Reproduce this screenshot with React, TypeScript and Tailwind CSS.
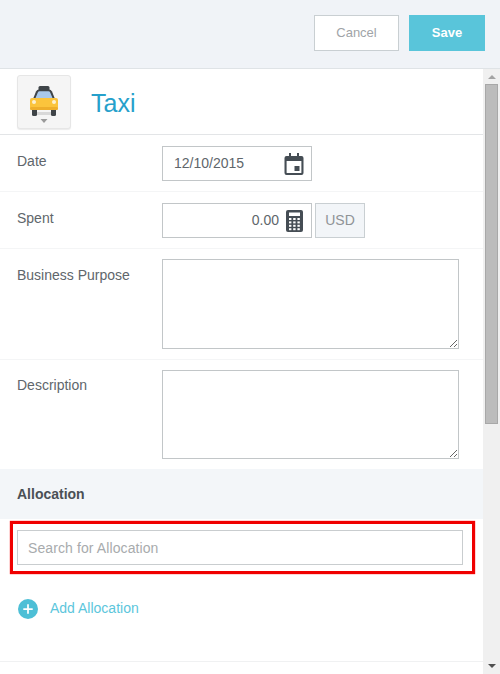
import { Plus } from "lucide-react";

const font = { fontFamily: '"Liberation Sans", Arial, sans-serif' };

function TaxiIcon() {
  return (
    <svg width="30" height="40" viewBox="0 0 30 40">
      <rect x="9.5" y="1" width="11" height="5" rx="1.5" fill="#3f4448" />
      <path d="M4 14 L7 6.5 Q8 4.5 10 4.5 H20 Q22 4.5 23 6.5 L26 14 Z" fill="#3f4448" />
      <path d="M6.5 13 L8.8 7.5 Q9.3 6.3 10.5 6.3 H19.5 Q20.7 6.3 21.2 7.5 L23.5 13 Z" fill="#a9c8ea" />
      <rect x="3" y="22" width="5" height="9" rx="1.5" fill="#3f4448" />
      <rect x="22" y="22" width="5" height="9" rx="1.5" fill="#3f4448" />
      <rect x="1" y="13" width="28" height="12" rx="2" fill="#fbc43c" />
      <rect x="1" y="22" width="28" height="3" rx="1.5" fill="#eeae2b" />
      <circle cx="5" cy="17" r="2" fill="#fdf1cf" />
      <circle cx="25" cy="17" r="2" fill="#fdf1cf" />
      <rect x="8" y="27" width="14" height="3" fill="#d8d8d8" />
      <path d="M11.5 34 H18.5 L15 38 Z" fill="#9a9a9a" />
    </svg>
  );
}

function CalendarIcon() {
  return (
    <svg width="20" height="22" viewBox="0 0 20 22" fill="#454d54">
      <path d="M5 0h2v3h6V0h2v3h2.5A2 2 0 0 1 19.5 5v15a2 2 0 0 1-2 2h-15a2 2 0 0 1-2-2V5a2 2 0 0 1 2-2H5V0zM2.6 8v11.4a.6.6 0 0 0 .6.6h13.6a.6.6 0 0 0 .6-.6V8H2.6z" />
      <rect x="10.5" y="13" width="5" height="5" />
    </svg>
  );
}

function CalculatorIcon() {
  const keys = [0, 1, 2, 3].flatMap((r) =>
    [0, 1, 2].map((c) => <rect key={`${r}-${c}`} x={3 + c * 4.2} y={8 + r * 3.4} width="2.4" height="2" fill="#fff" />),
  );
  return (
    <svg width="17" height="22" viewBox="0 0 17 22">
      <rect width="17" height="22" rx="2" fill="#454d54" />
      <rect x="3" y="2.5" width="11" height="3.5" fill="#fff" />
      {keys}
    </svg>
  );
}

function Row({ label, className, children }: { label: string; className: string; children: React.ReactNode }) {
  return (
    <div className={`flex border-b border-[#f4f5f6] pl-[17px] ${className}`}>
      <div className="w-[145px] shrink-0 text-[14px] leading-[20px] text-[#60666b]">{label}</div>
      {children}
    </div>
  );
}

export default function App() {
  return (
    <div className="relative flex h-[674px] w-[500px] flex-col overflow-hidden bg-white" style={font}>
      <header className="flex h-[69px] shrink-0 items-start justify-end gap-[10px] border-b border-[#dfe3e6] bg-[#f0f3f7] pr-[15px] pt-[15px]">
        <button className="h-[36px] w-[85px] border border-[#c9cfd2] bg-white text-[13px] text-[#a0a4a7]">Cancel</button>
        <button className="h-[36px] w-[76px] bg-[#59c5da] text-[13px] font-bold text-white">Save</button>
      </header>

      <div className="flex min-h-0 flex-1">
        <main className="w-[483px] shrink-0">
          <div className="flex h-[66px] items-center gap-[20px] border-b border-[#e3e5e7] pl-[17px]">
            <div className="flex h-[54px] w-[54px] items-center justify-center rounded-[3px] border border-[#e6e6e6] bg-[#f5f5f5] pt-[6px] shadow-[0_1px_1px_rgba(0,0,0,0.08)]">
              <TaxiIcon />
            </div>
            <h1 className="pt-[3px] text-[25px] font-normal leading-none text-[#26a0cb]">Taxi</h1>
          </div>

          <Row label="Date" className="h-[57px] pt-[16px]">
            <div className="-mt-[5px] flex h-[35px] w-[150px] items-center justify-between border border-[#c2c6c8] pl-[11px] pr-[7px] text-[14px] text-[#60666b]">
              <span>12/10/2015</span>
              <CalendarIcon />
            </div>
          </Row>

          <Row label="Spent" className="h-[57px] pt-[16px]">
            <div className="-mt-[5px] flex gap-[3px]">
              <div className="flex h-[35px] w-[150px] items-center justify-end gap-[7px] border border-[#c2c6c8] pr-[8px] text-[14px] text-[#60666b]">
                <span>0.00</span>
                <CalculatorIcon />
              </div>
              <div className="flex h-[35px] w-[50px] items-center justify-center border border-[#c9cfd2] bg-[#f2f5f8] text-[14px] text-[#8f9396]">USD</div>
            </div>
          </Row>

          <Row label="Business Purpose" className="h-[111px] pt-[16px]">
            <textarea className="-mt-[6px] h-[90px] w-[297px] resize border border-[#c2c6c8]" />
          </Row>

          <Row label="Description" className="h-[109px] border-b-0 pt-[15px]">
            <textarea className="-mt-[5px] h-[89px] w-[297px] resize border border-[#c2c6c8]" />
          </Row>

          <div className="flex h-[50px] items-center bg-[#f3f6f9] pl-[17px] text-[14px] font-bold text-[#4a5055]">Allocation</div>

          <div className="px-[17px] pt-[11px]">
            <input
              placeholder="Search for Allocation"
              className="h-[35px] w-[446px] border border-[#c9cdcf] pl-[10px] text-[14px] tracking-[0.1px] text-[#555b60] outline-none placeholder:text-[#a8abad]"
            />
          </div>

          <div className="flex items-center gap-[12px] pl-[18px] pt-[33px]">
            <span className="flex h-[20px] w-[20px] items-center justify-center rounded-full bg-[#4dbfd6]">
              <Plus size={14} strokeWidth={3} className="text-white" />
            </span>
            <span className="text-[14px] text-[#5cc6dc]">Add Allocation</span>
          </div>

          <div className="mt-[42px] border-t border-[#f0f1f2]" />
        </main>

        <div className="relative flex w-[17px] shrink-0 flex-col items-center bg-[#f0f0f0]">
          <div className="mt-[6px] h-0 w-0 border-x-[4px] border-b-[4px] border-x-transparent border-b-[#a3a3a3]" />
          <div className="mt-[5px] h-[340px] w-[13px] border border-[#a8a8a8] bg-[#bcbcbc]" />
          <div className="mt-auto mb-[6px] h-0 w-0 border-x-[4px] border-t-[4px] border-x-transparent border-t-[#505050]" />
        </div>
      </div>

      <div className="pointer-events-none absolute left-[10px] top-[521px] h-[53px] w-[465px] border-[3px] border-[#f00000] shadow-[0_0_1px_#ff0000]" />
    </div>
  );
}
